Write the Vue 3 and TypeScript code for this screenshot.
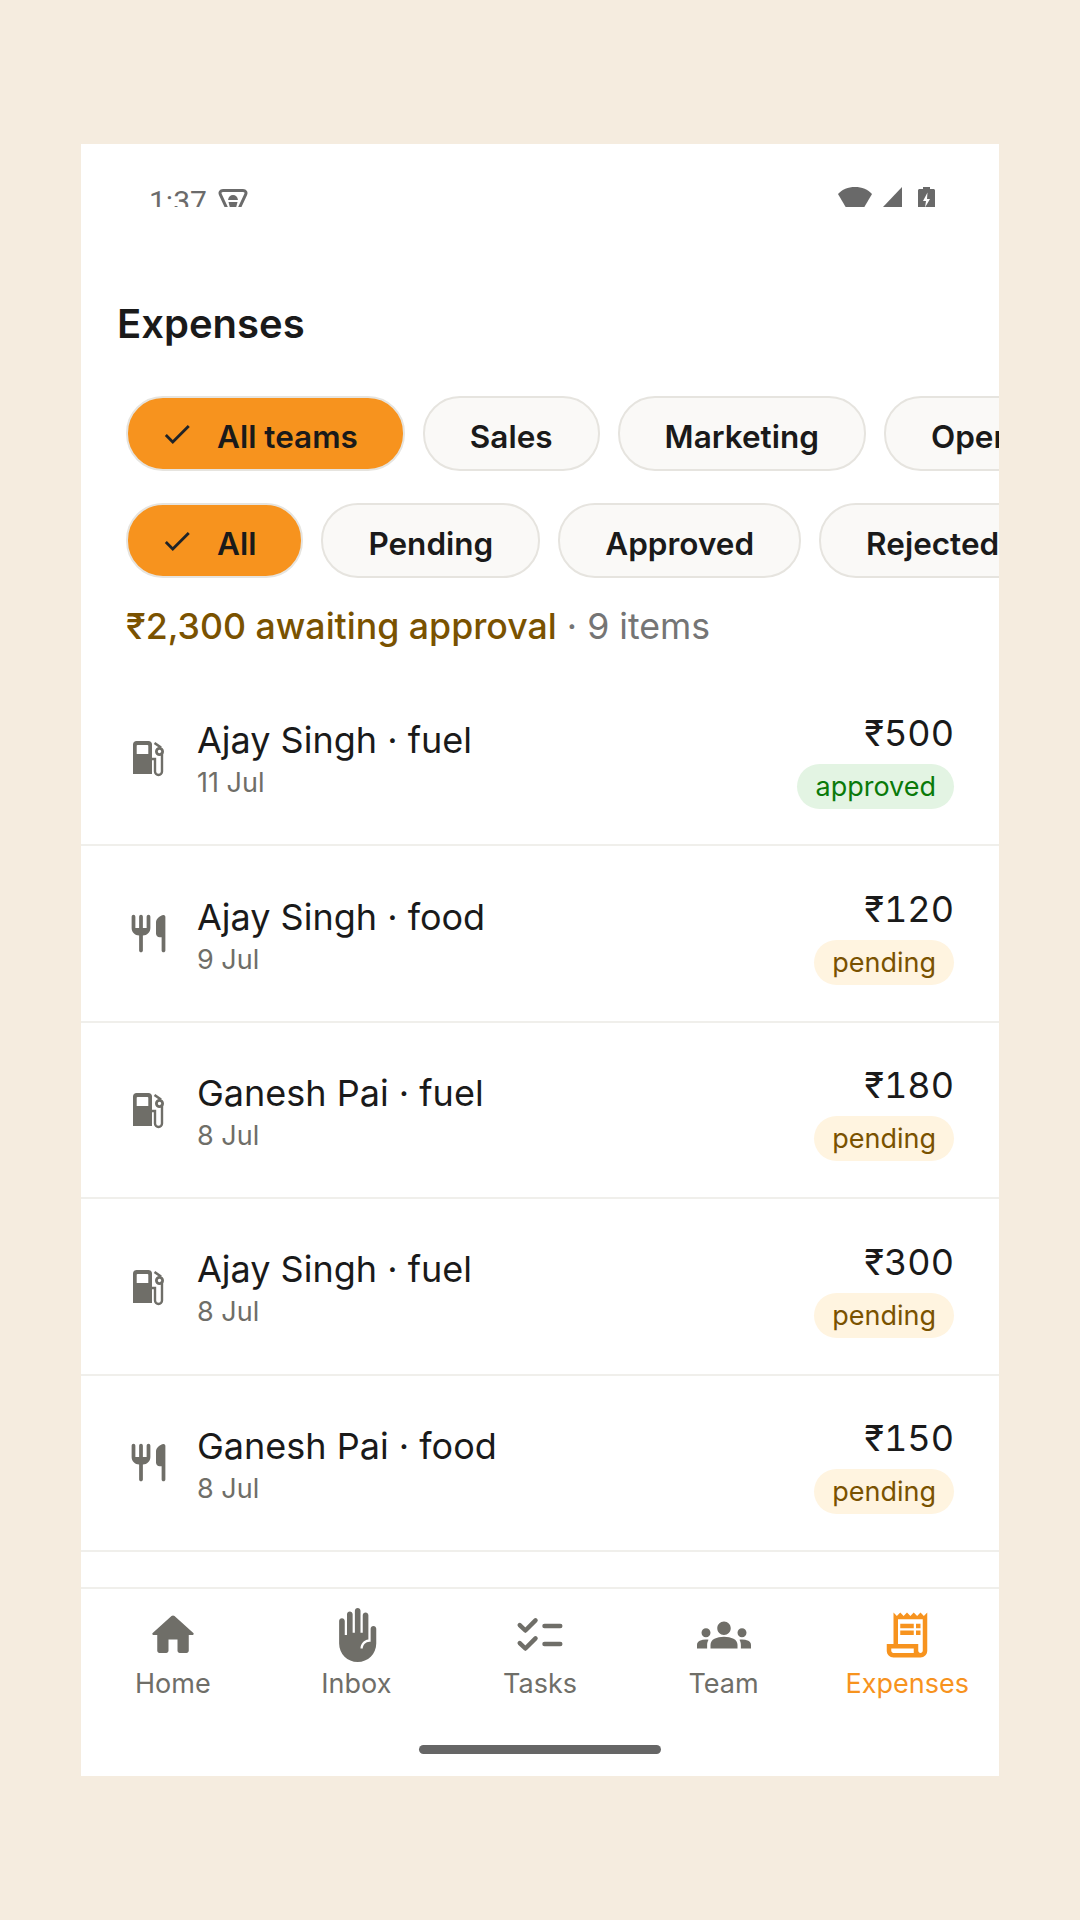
<script setup lang="ts">
interface Expense {
  name: string
  kind: 'fuel' | 'food'
  date: string
  amount: string
  status: 'approved' | 'pending'
}

const teamChips = ['All teams', 'Sales', 'Marketing', 'Operations']
const statusChips = ['All', 'Pending', 'Approved', 'Rejected']

const expenses: Expense[] = [
  { name: 'Ajay Singh', kind: 'fuel', date: '11 Jul', amount: '₹500', status: 'approved' },
  { name: 'Ajay Singh', kind: 'food', date: '9 Jul', amount: '₹120', status: 'pending' },
  { name: 'Ganesh Pai', kind: 'fuel', date: '8 Jul', amount: '₹180', status: 'pending' },
  { name: 'Ajay Singh', kind: 'fuel', date: '8 Jul', amount: '₹300', status: 'pending' },
  { name: 'Ganesh Pai', kind: 'food', date: '8 Jul', amount: '₹150', status: 'pending' },
]
</script>

<template>
  <div class="page">
    <div class="phone">
      <!-- status bar, cut off at the bottom like the capture -->
      <div class="status">
        <div class="status-left">
          <span class="time">1:37</span>
          <svg class="shield" viewBox="0 0 30 30">
            <path d="M5 3.500h20c2.600 0 3.600 2 2.600 4.200L19 26c-1.800 3-6.200 3-8 0L2.400 7.700C1.400 5.500 2.400 3.500 5 3.500z" fill="none" stroke="#6b6b6b" stroke-width="3" />
            <path d="M10 13c.500-3.400 2.500-5 5-5s4.500 1.600 5 5zM10.500 15h9l-1.500 6h-6z" fill="#6b6b6b" />
          </svg>
        </div>
        <div class="status-right">
          <svg class="wifi" viewBox="0 0 34 24"><path d="M0 7C4 2.500 10 0 17 0s13 2.500 17 7L24 24H10z" fill="#696969" /></svg>
          <svg class="signal" viewBox="0 0 19 20"><path d="M19 0v20H0z" fill="#696969" /></svg>
          <svg class="battery" viewBox="0 0 17 24">
            <path d="M5 2V0h7v2h3.500c.800 0 1.500.700 1.500 1.500V24H0V3.500C0 2.700.700 2 1.500 2z" fill="#696969" />
            <path d="M9.500 5.500 5 14h3l-1 6.500L12 12H9z" fill="#fff" />
          </svg>
        </div>
      </div>

      <h1 class="title">Expenses</h1>

      <div class="chips">
        <div v-for="(chip, i) in teamChips" :key="chip" class="chip" :class="{ selected: i === 0 }">
          <svg v-if="i === 0" class="check" viewBox="0 0 24 24"><path d="M9 16.170 4.830 12l-1.420 1.410L9 19 21 7l-1.410-1.410z" /></svg>
          <span class="chip-text">{{ chip }}</span>
        </div>
      </div>
      <div class="chips second">
        <div v-for="(chip, i) in statusChips" :key="chip" class="chip" :class="{ selected: i === 0 }">
          <svg v-if="i === 0" class="check" viewBox="0 0 24 24"><path d="M9 16.170 4.830 12l-1.420 1.410L9 19 21 7l-1.410-1.410z" /></svg>
          <span class="chip-text">{{ chip }}</span>
        </div>
      </div>

      <p class="summary"><span class="awaiting">₹2,300 awaiting approval</span> · 9 items</p>

      <div class="list">
        <div v-for="item in expenses" :key="item.name + item.amount" class="row">
          <div class="row-icon">
            <svg v-if="item.kind === 'fuel'" viewBox="0 0 45 45">
              <path d="M10.500 6h12c2 0 3.500 1.500 3.500 3.500V39H7V9.500C7 7.500 8.500 6 10.500 6zM11.500 10c-.500 0-.800.300-.800.800V19h11.600v-8.200c0-.500-.300-.800-.800-.800z" fill="#6f6e68" fill-rule="evenodd" />
              <path d="M26 24h3v12.500a3 3 0 0 0 7 0V17" fill="none" stroke="#6f6e68" stroke-width="2.400" />
              <path d="M28.500 8 35 12.500" fill="none" stroke="#6f6e68" stroke-width="2.600" />
              <circle cx="33.500" cy="16.500" r="3.100" fill="none" stroke="#6f6e68" stroke-width="2.800" />
            </svg>
            <svg v-else viewBox="0 0 24 24">
              <path d="M16 6v6c0 1.100.900 2 2 2h1v7c0 .550.450 1 1 1s1-.450 1-1V3.130c0-.650-.610-1.130-1.240-.980C17.600 2.680 16 4.510 16 6zm-5 3H9V3c0-.550-.450-1-1-1s-1 .450-1 1v6H5V3c0-.550-.450-1-1-1s-1 .450-1 1v6c0 2.210 1.790 4 4 4v8c0 .550.450 1 1 1s1-.450 1-1v-8c2.210 0 4-1.790 4-4V3c0-.550-.450-1-1-1s-1 .450-1 1v6z" fill="#6f6e68" />
            </svg>
          </div>
          <div class="row-main">
            <div class="row-title">{{ item.name }} · {{ item.kind }}</div>
            <div class="row-date">{{ item.date }}</div>
          </div>
          <div class="row-side">
            <div class="amount">{{ item.amount }}</div>
            <div class="badge" :class="item.status">{{ item.status }}</div>
          </div>
        </div>
      </div>

      <nav class="nav">
        <div class="nav-item">
          <svg viewBox="0 0 24 24"><path d="M10 19v-5h4v5c0 .550.450 1 1 1h3c.550 0 1-.450 1-1v-7h1.700c.460 0 .680-.570.330-.870L12.670 3.600c-.380-.340-.960-.340-1.340 0l-8.360 7.530c-.340.300-.130.870.330.870H5v7c0 .550.450 1 1 1h3c.550 0 1-.450 1-1z" /></svg>
          <span>Home</span>
        </div>
        <div class="nav-item">
          <svg viewBox="0 0 24 24"><path d="M19.750 8c-.690 0-1.250.560-1.250 1.250V15H18c-1.650 0-3 1.350-3 3h-1c0-2.040 1.530-3.720 3.500-3.970V3.250C17.500 2.560 16.940 2 16.250 2S15 2.560 15 3.250V11h-1V1.250C14 .560 13.440 0 12.750 0S11.500.560 11.500 1.250V11h-1V2.750c0-.690-.560-1.250-1.250-1.250S8 2.060 8 2.750V12H7V5.750c0-.690-.560-1.250-1.250-1.250S4.500 5.060 4.500 5.750v10c0 4.560 3.690 8.250 8.250 8.250S21 20.310 21 15.750v-6.500C21 8.560 20.440 8 19.750 8z" /></svg>
          <span>Inbox</span>
        </div>
        <div class="nav-item">
          <svg viewBox="0 0 24 24">
            <path d="M3 7.600 5.500 10 10 5.500M3 15.600 5.500 18 10 13.500" fill="none" stroke="#6f6e68" stroke-width="2" stroke-linecap="round" stroke-linejoin="round" />
            <path d="M14 8h7M14 16h7" fill="none" stroke="#6f6e68" stroke-width="2" stroke-linecap="round" />
          </svg>
          <span>Tasks</span>
        </div>
        <div class="nav-item">
          <svg viewBox="0 0 24 24"><path d="M12 12.750c1.630 0 3.070.390 4.240.900 1.080.480 1.760 1.560 1.760 2.730V18H6v-1.610c0-1.180.680-2.260 1.760-2.730 1.170-.520 2.610-.910 4.240-.910zM4 13c1.100 0 2-.900 2-2s-.900-2-2-2-2 .900-2 2 .900 2 2 2zm1.130 1.100c-.370-.060-.740-.100-1.130-.100-.990 0-1.930.210-2.780.580C.480 14.900 0 15.620 0 16.430V18h4.500v-1.610c0-.830.230-1.610.630-2.290zM20 13c1.100 0 2-.900 2-2s-.900-2-2-2-2 .900-2 2 .900 2 2 2zm4 3.430c0-.810-.480-1.530-1.220-1.850-.850-.370-1.790-.580-2.780-.580-.390 0-.760.040-1.130.100.400.680.630 1.460.630 2.290V18H24v-1.570zM12 6c1.660 0 3 1.340 3 3s-1.340 3-3 3-3-1.340-3-3 1.340-3 3-3z" /></svg>
          <span>Team</span>
        </div>
        <div class="nav-item active">
          <svg viewBox="0 0 24 24">
            <path d="M19.500 3.500 18 2l-1.500 1.500L15 2l-1.500 1.500L12 2l-1.500 1.500L9 2 7.500 3.500 6 2v14H3v3c0 1.660 1.340 3 3 3h12c1.660 0 3-1.340 3-3V2l-1.500 1.500zM15 20H6c-.550 0-1-.450-1-1v-1h10v2zm4-1c0 .550-.450 1-1 1s-1-.450-1-1v-3H8V5h11v14z" />
            <path d="M9 7h6v2H9zm7 0h2v2h-2zm-7 3h6v2H9zm7 0h2v2h-2z" />
          </svg>
          <span>Expenses</span>
        </div>
      </nav>

      <div class="home-zone">
        <div class="home-bar"></div>
      </div>
    </div>
  </div>
</template>

<style>
body {
  margin: 0;
  background: #f5ecdf;
}
</style>

<style scoped>
.page {
  height: 1920px;
  padding-top: 144px;
  box-sizing: border-box;
  background: #f5ecdf;
  font-family: Inter, 'Noto Sans', sans-serif;
  color: #1a1a1a;
}

.phone {
  width: 918px;
  height: 1632px;
  margin: 0 auto;
  background: #fff;
  display: flex;
  flex-direction: column;
  overflow: hidden;
}

.status {
  height: 63px;
  flex-shrink: 0;
  overflow: hidden;
  display: flex;
  justify-content: space-between;
  padding: 43px 64px 0 68px;
  box-sizing: border-box;
}

.status-left {
  display: flex;
  align-items: flex-start;
  gap: 11px;
}

.time {
  font-family: Roboto, sans-serif;
  font-size: 30px;
  line-height: 34px;
  color: #6b6b6b;
  margin-top: -2px;
}

.shield {
  width: 30px;
  height: 30px;
}

.status-right {
  display: flex;
  align-items: flex-start;
  gap: 11px;
}

.wifi {
  width: 34px;
  height: 24px;
}

.signal {
  width: 19px;
  height: 20px;
  margin-right: 5px;
}

.battery {
  width: 17px;
  height: 24px;
}

.title {
  margin: 93px 0 48px 36px;
  font-size: 40px;
  line-height: 48px;
  font-weight: 600;
  color: #1a1a1a;
}

.chips {
  display: flex;
  gap: 18px;
  padding-left: 45px;
  overflow: hidden;
  flex-shrink: 0;
}

.second {
  margin-top: 32px;
}

.chip {
  height: 75px;
  box-sizing: border-box;
  flex-shrink: 0;
  display: flex;
  align-items: center;
  padding: 0 45px;
  border: 2px solid #e6e4df;
  border-radius: 37px;
  background: #faf9f7;
}

.chip.selected {
  background: #f7931e;
  padding: 0 45px 0 32px;
}

.check {
  width: 34px;
  height: 34px;
  margin-right: 23px;
  fill: #1f2328;
}

.chip-text {
  font-size: 31.5px;
  font-weight: 600;
  line-height: 36px;
  padding-top: 6px;
  white-space: nowrap;
}

.summary {
  margin: 26px 0 22px 45px;
  font-size: 35.7px;
  line-height: 44px;
  color: #757575;
  flex-shrink: 0;
}

.awaiting {
  color: #7a5200;
  font-weight: 500;
}

.list {
  flex: 1;
  min-height: 0;
  overflow: hidden;
}

.row {
  height: 176.4px;
  box-sizing: border-box;
  border-bottom: 2px solid #f0efeb;
  display: flex;
  align-items: center;
  padding: 0 45px;
}

.row-icon {
  width: 45px;
  height: 45px;
  flex-shrink: 0;
  margin-right: 26px;
}

.row-icon svg {
  display: block;
  width: 45px;
  height: 45px;
}

.row-main {
  flex: 1;
  padding-top: 5px;
}

.row-title {
  font-size: 36px;
  line-height: 44px;
}

.row-date {
  font-size: 27px;
  line-height: 36px;
  margin-top: 3px;
  color: #6f6e68;
}

.row-side {
  display: flex;
  flex-direction: column;
  align-items: flex-end;
  gap: 9px;
  padding-top: 5px;
}

.amount {
  font-size: 36px;
  line-height: 44px;
  font-variant-numeric: tabular-nums;
}

.badge {
  height: 45px;
  padding: 0 18px;
  border-radius: 23px;
  font-size: 27px;
  line-height: 45px;
}

.badge.approved {
  background: #e3f4e3;
  color: #0a7a0a;
}

.badge.pending {
  background: #fff4e0;
  color: #7a5200;
}

.nav {
  height: 130px;
  flex-shrink: 0;
  box-sizing: border-box;
  border-top: 2px solid #f0efeb;
  display: grid;
  grid-template-columns: repeat(5, 1fr);
  padding-top: 19px;
}

.nav-item {
  display: flex;
  flex-direction: column;
  align-items: center;
  color: #6f6e68;
  font-size: 27px;
  line-height: 36px;
}

.nav-item svg {
  width: 54px;
  height: 54px;
  fill: #6f6e68;
  margin-bottom: 4px;
}

.nav-item.active {
  color: #f7931e;
}

.nav-item.active svg {
  fill: #f7931e;
}

.home-zone {
  height: 59px;
  flex-shrink: 0;
  box-sizing: border-box;
  display: flex;
  justify-content: center;
  padding-top: 28px;
}

.home-bar {
  width: 242px;
  height: 9px;
  border-radius: 5px;
  background: #666;
}
</style>
